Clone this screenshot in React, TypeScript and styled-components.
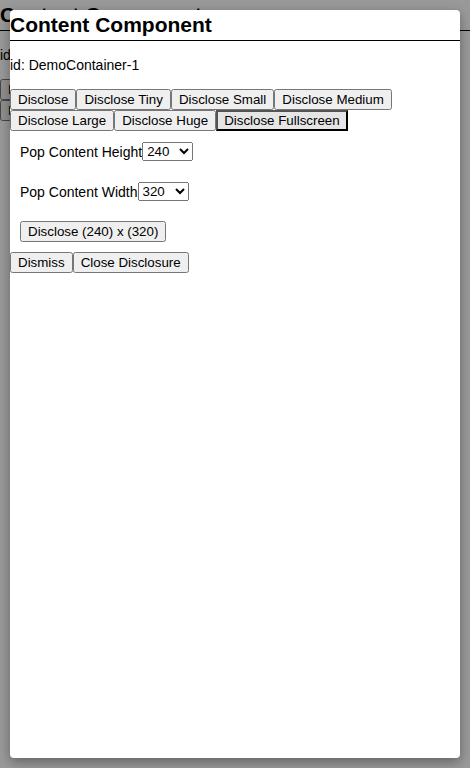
import React from "react";
import styled, { createGlobalStyle } from "styled-components";

const GlobalStyle = createGlobalStyle`
  html, body {
    margin: 0;
    padding: 0;
    background: #ffffff;
    font-family: "Liberation Sans", Arial, sans-serif;
    color: #000;
  }
`;

const Page = styled.div`
  width: 470px;
  height: 768px;
  overflow: hidden;
  position: relative;
`;

const Heading = styled.h2`
  margin: 0;
  font-size: 21px;
  line-height: 30px;
  font-weight: 700;
  border-bottom: 1px solid #000;
`;

const IdLine = styled.p`
  margin: 16px 0;
  font-size: 14px;
  line-height: 16px;
`;

const Toolbar = styled.div`
  display: flex;
  flex-wrap: wrap;
  align-items: flex-start;
`;

const Button = styled.button<{ $hover?: boolean }>`
  font-family: "Liberation Sans", Arial, sans-serif;
  font-size: 13.333px;
  margin: 0;
  ${(p) => (p.$hover ? "background-color: #e5e5e5;" : "")}
`;

const Section = styled.div`
  padding: 10px;
  display: flex;
  flex-direction: column;
  align-items: flex-start;
  gap: 19px;
`;

const Row = styled.div`
  display: flex;
  align-items: center;
  height: 21px;
`;

const Label = styled.label`
  font-size: 14px;
  line-height: 16px;
`;

const Select = styled.select`
  font-family: "Liberation Sans", Arial, sans-serif;
  font-size: 13.333px;
  margin: 0;
  width: 51px;
  height: 19px;
`;

const Overlay = styled.div`
  position: absolute;
  inset: 0;
  background: rgba(0, 0, 0, 0.4);
`;

const Modal = styled.div`
  position: absolute;
  top: 10px;
  left: 10px;
  right: 10px;
  bottom: 10px;
  background: #fff;
  border-radius: 4px;
  box-shadow: 0 4px 12px rgba(0, 0, 0, 0.35);
  overflow: hidden;
`;

const sizes = ["Tiny", "Small", "Medium", "Large", "Huge", "Fullscreen"];
const heights = ["120", "240", "360", "480"];
const widths = ["160", "320", "480", "640"];

function ContentComponent({ withModalBits }: { withModalBits?: boolean }) {
  return (
    <div>
      <Heading>Content Component</Heading>
      <IdLine>id: DemoContainer-1</IdLine>
      <Toolbar>
        <Button>Disclose</Button>
        {sizes.map((s) => (
          <Button key={s} $hover={withModalBits && s === "Fullscreen"}>
            Disclose {s}
          </Button>
        ))}
      </Toolbar>
      <Section>
        <Row>
          <Label>Pop Content Height</Label>
          <Select defaultValue="240">
            {heights.map((h) => (
              <option key={h} value={h}>
                {h}
              </option>
            ))}
          </Select>
        </Row>
        <Row>
          <Label>Pop Content Width</Label>
          <Select defaultValue="320">
            {widths.map((w) => (
              <option key={w} value={w}>
                {w}
              </option>
            ))}
          </Select>
        </Row>
        <Button>Disclose (240) x (320)</Button>
      </Section>
      {withModalBits && (
        <Toolbar>
          <Button>Dismiss</Button>
          <Button>Close Disclosure</Button>
        </Toolbar>
      )}
    </div>
  );
}

export default function App() {
  return (
    <Page>
      <GlobalStyle />
      <ContentComponent />
      <Overlay />
      <Modal>
        <ContentComponent withModalBits />
      </Modal>
    </Page>
  );
}
